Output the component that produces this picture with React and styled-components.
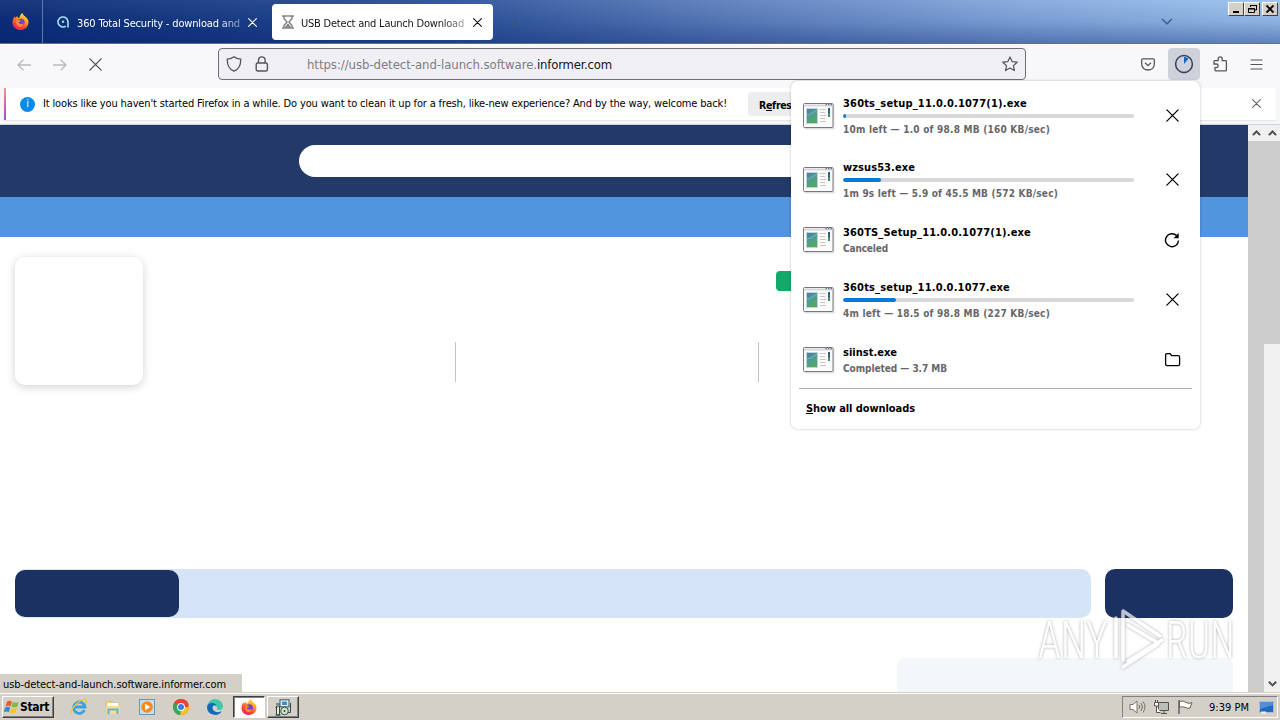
import React, { useLayoutEffect, useRef } from 'react'
import styled, { createGlobalStyle, css } from 'styled-components'

const downloads = [
  { name: '360ts_setup_11.0.0.1077(1).exe', nameWidth: 184, info: '10m left — 1.0 of 98.8 MB (160 KB/sec)', infoWidth: 207, progress: 1, action: 'cancel', height: 64 },
  { name: 'wzsus53.exe', nameWidth: 72, info: '1m 9s left — 5.9 of 45.5 MB (572 KB/sec)', infoWidth: 215, progress: 12.9, action: 'cancel', height: 64 },
  { name: '360TS_Setup_11.0.0.1077(1).exe', nameWidth: 188, info: 'Canceled', infoWidth: 45, action: 'retry', height: 56 },
  { name: '360ts_setup_11.0.0.1077.exe', nameWidth: 167, info: '4m left — 18.5 of 98.8 MB (227 KB/sec)', infoWidth: 207, progress: 18.2, action: 'cancel', height: 64 },
  { name: 'siinst.exe', nameWidth: 54, info: 'Completed — 3.7 MB', infoWidth: 104, action: 'folder', height: 56 },
]

// spreads the letters so a label always takes the given width
const Fit = ({ width, children, ...rest }) => {
  const ref = useRef(null)

  useLayoutEffect(() => {
    const el = ref.current
    el.style.letterSpacing = '0px'
    const natural = el.getBoundingClientRect().width
    el.style.letterSpacing = `${(width - natural) / el.textContent.length}px`
  }, [width, children])

  return <FitText ref={ref} {...rest}>{children}</FitText>
}

const Cross = ({ size = 12, color = '#15141a', weight = 1.2 }) => (
  <svg width={size} height={size} viewBox="0 0 12 12" fill="none" stroke={color} strokeWidth={weight} strokeLinecap="round">
    <path d="M.8.8l10.4 10.4M11.2.8L.8 11.2" />
  </svg>
)

const Chevron = ({ up, color = '#505050', width = 8, weight = 2 }) => (
  <svg width={width} height={width * 0.65} viewBox="0 0 12 8" fill="none" stroke={color} strokeWidth={weight * 1.4}>
    <path d={up ? 'M1 7l5-5 5 5' : 'M1 1l5 5 5-5'} />
  </svg>
)

const FirefoxLogo = ({ size = 17 }) => (
  <svg width={size} height={size} viewBox="0 0 17 17">
    <defs>
      <linearGradient id="fox" x1=".8" y1="0" x2=".3" y2="1">
        <stop offset="0" stopColor="#fff04a" />
        <stop offset=".4" stopColor="#ff9a22" />
        <stop offset=".75" stopColor="#ff4035" />
        <stop offset="1" stopColor="#e3206f" />
      </linearGradient>
    </defs>
    <path d="M10.5 0c.4 1.7 1.3 2.4 2.6 3.4 2.2 1.7 3.6 3.600 3.400 6.100C16.200 13.900 12.800 17 8.500 17 4 17 .5 13.700.5 9.200.5 7 1.300 5 2.700 3.400l.6 1.500 1.900-2 .8 2 1.500-.3C7.800 2.700 8.700.8 10.500 0z" fill="url(#fox)" />
    <circle cx="9" cy="9.300" r="3.600" fill="#7540d8" />
    <path d="M4.500 7.300c1.600-.8 2.900.1 4.400.5-1 1-2.300 1-2.600 2 1.200 1.600 3.600 1.900 5.300.5-.3 2.700-2.700 4-5 3.200-2.200-.8-3-3.700-2.100-6.200z" fill="#ff9027" />
  </svg>
)

const FileIcon = () => (
  <svg width="32" height="28" viewBox="0 0 32 28">
    <defs>
      <linearGradient id="shot" x1="0" y1="0" x2=".5" y2="1">
        <stop offset="0" stopColor="#4c7fa8" />
        <stop offset=".55" stopColor="#4d9d93" />
        <stop offset="1" stopColor="#55a860" />
      </linearGradient>
    </defs>
    <rect x="1.500" y="2" width="30" height="25.500" rx="1" fill="#000" opacity=".12" />
    <rect x=".5" y="1.500" width="29.500" height="24" rx="1" fill="#fcfcfc" stroke="#77797d" />
    <path d="M1 3.500h28.500" stroke="#d5d7dc" strokeWidth="2" />
    <path d="M22.500 2.700h1.500M25 2.700h1.500M27.500 2.700h1.500" stroke="#4f5870" />
    <rect x="3" y="6" width="12" height="16" fill="#c3d3dc" />
    <rect x="4" y="7" width="10" height="14" fill="url(#shot)" />
    <path d="M4 13c4-.5 7-3 10-5" stroke="#9ad0cf" fill="none" opacity=".6" />
    <path d="M17 7.500h6M17 10.500h5M17 13.500h6M17 16.500h5M17 19.500h6" stroke="#cbc6c3" />
    <rect x="25" y="6" width="2" height="9" fill="#355f82" />
    <rect x="25" y="11" width="2" height="4" fill="#468c68" />
  </svg>
)

const RowAction = ({ type }) => {
  if (type === 'retry') {
    return (
      <svg width="16" height="16" viewBox="0 0 16 16" fill="none" stroke="#000" strokeWidth="1.400">
        <path d="M14.500 8.500A6.500 6.500 0 1 1 12.600 3.600" />
        <path d="M14.700 1v5.200H9.500z" fill="#000" stroke="none" />
      </svg>
    )
  }
  if (type === 'folder') {
    return (
      <svg width="17" height="16" viewBox="0 0 17 16" fill="none" stroke="#000" strokeWidth="1.300">
        <path d="M1.600 3q0-1.300 1.300-1.300H6l1.800 1.900h6.400q1.400 0 1.400 1.400v7.200q0 1.400-1.400 1.400H3q-1.400 0-1.400-1.400z" />
      </svg>
    )
  }
  return <Cross size={13} color="#000" />
}

const DownloadsPanel = () => (
  <Panel>
    {downloads.map(d => (
      <DownloadRow key={d.name} $height={d.height}>
        <FileIcon />
        <Details>
          <FileName $tall={d.progress !== undefined}><Fit width={d.nameWidth}>{d.name}</Fit></FileName>
          {d.progress !== undefined && (
            <Track>
              <Bar style={{ width: `${d.progress}%` }} />
            </Track>
          )}
          <FileInfo $tall={d.progress !== undefined}><Fit width={d.infoWidth}>{d.info}</Fit></FileInfo>
        </Details>
        <ActionSlot $raise={d.action === 'cancel'}>
          <RowAction type={d.action} />
        </ActionSlot>
      </DownloadRow>
    ))}
    <PanelFooter>
      <Fit width={109}><u>S</u>how all downloads</Fit>
    </PanelFooter>
  </Panel>
)

const TabBar = () => (
  <TabStrip>
    <FirefoxSlot><FirefoxLogo /></FirefoxSlot>
    <Tab $width={225}>
      <svg width="12" height="12" viewBox="0 0 12 12" fill="none">
        <path d="M8.800 10.100A5 5 0 1 1 11 6v5.500" stroke="#a9e1f2" strokeWidth="1.600" />
        <circle cx="6" cy="5.800" r="1.300" fill="#8de6c5" />
      </svg>
      <TabTitle $gap={8}><Fit width={163}>360 Total Security - download and</Fit></TabTitle>
      <Cross size={9} color="#fff" weight={1.5} />
    </Tab>
    <Tab $active $width={221}>
      <svg width="12" height="14" viewBox="0 0 12 14" fill="none" stroke="#858585" strokeWidth="1.500">
        <path d="M0 1h12M0 13h12M2 1v2.500L5 7l-3 3.500V13M10 1v2.500L7 7l3 3.500V13" />
        <path d="M4 12l2-2.500L8 12z" fill="#858585" />
      </svg>
      <TabTitle $gap={7}><Fit width={163}>USB Detect and Launch Download</Fit></TabTitle>
      <Cross size={9} weight={1.500} />
    </Tab>
    <NewTab>
      <svg width="10" height="10" viewBox="0 0 10 10" stroke="#3c5480" strokeWidth="1.300"><path d="M5 0v10M0 5h10" /></svg>
    </NewTab>
    <TabListSlot><Chevron color="#3f5f92" width={12} weight={1.100} /></TabListSlot>
    <WindowButtons>
      <WindowButton><svg width="11" height="10"><path d="M2 8h6" stroke="#000" strokeWidth="2" /></svg></WindowButton>
      <WindowButton>
        <svg width="11" height="10" fill="none" stroke="#000"><path d="M3.500 3V1.500h6V6H8M3 1.500h7" /><path d="M1.500 4.500h6v4h-6zM1 5h7" /></svg>
      </WindowButton>
      <WindowButton $apart><svg width="10" height="10"><path d="M1.500 1.500l7 7M8.500 1.500l-7 7" stroke="#000" strokeWidth="1.800" /></svg></WindowButton>
    </WindowButtons>
  </TabStrip>
)

const Navigation = () => (
  <Toolbar>
    <NavButtons>
      <svg width="14" height="12" viewBox="0 0 14 12" fill="none" stroke="#b9b9bf" strokeWidth="1.300"><path d="M14 6H1M6.500.7L1 6l5.500 5.300" /></svg>
      <svg width="14" height="12" viewBox="0 0 14 12" fill="none" stroke="#b9b9bf" strokeWidth="1.300"><path d="M0 6h13M7.500.7L13 6l-5.500 5.300" /></svg>
      <Cross size={13} color="#4e4d55" />
    </NavButtons>
    <UrlBar>
      <svg width="16" height="16" viewBox="0 0 16 16" fill="none" stroke="#55545c" strokeWidth="1.300">
        <path d="M8 .8c2 1.600 4.200 2.100 6.700 2.300.2 5-.8 9.900-6.700 12.100C2.100 13 1.100 8.100 1.300 3.100 3.800 2.900 6 2.400 8 .8z" />
      </svg>
      <LockSlot>
        <svg width="14" height="16" viewBox="0 0 14 16" fill="none" stroke="#55545c" strokeWidth="1.400">
          <rect x="1.200" y="7" width="11.200" height="8" rx="1.500" />
          <path d="M3.500 7V4.200a3.300 3.300 0 0 1 6.600 0V7" />
        </svg>
      </LockSlot>
      <Address>
        <Fit width={230}>https://usb-detect-and-launch.software.</Fit>
        <Domain><Fit width={75}>informer.com</Fit></Domain>
      </Address>
      <svg width="16" height="16" viewBox="0 0 16 16" fill="none" stroke="#55545c" strokeWidth="1.200" strokeLinejoin="round">
        <path d="M8 .9l2.100 4.700 5.100.6-3.800 3.400 1 5L8 12.100l-4.500 2.500 1-5L.8 6.200l5.100-.6z" />
      </svg>
    </UrlBar>
    <ToolButtons>
      <ToolButton>
        <svg width="14" height="13" viewBox="0 0 14 13" fill="none" stroke="#55545c" strokeWidth="1.300">
          <path d="M1.800.8h10.400q1.100 0 1.100 1.100V6c0 8-12.600 8-12.600 0V1.900Q.7.800 1.800.8z" />
          <path d="M4 4.700l3 2.900 3-2.900" />
        </svg>
      </ToolButton>
      <ToolButton $open>
        <svg width="20" height="20" viewBox="0 0 20 20">
          <circle cx="10" cy="10" r="8.400" fill="none" stroke="#34405b" strokeWidth="1.500" />
          <path d="M10 10V3a7 7 0 0 1 4.500 1.500z" fill="#1263be" />
        </svg>
      </ToolButton>
      <ToolButton>
        <svg width="15" height="16" viewBox="0 0 15 16" fill="none" stroke="#55545c" strokeWidth="1.300">
          <path d="M5.200 4.600V2.800a2 2 0 0 1 4 0v1.800h3.400q.8 0 .8.800V14q0 .9-.9.900H3q-1 0-1-1v-2.300h1.300a1.800 1.800 0 0 0 0-3.600H1V5.400q0-.8.8-.8z" />
        </svg>
      </ToolButton>
      <ToolButton>
        <svg width="13" height="11" stroke="#55545c" strokeWidth="1.200"><path d="M.5 1h12M.5 5.500h12M.5 10h12" /></svg>
      </ToolButton>
    </ToolButtons>
  </Toolbar>
)

const Watermark = () => (
  <Mark width="204" height="70" viewBox="0 0 204 70">
    <g fill="#fff" fontFamily="Roboto, sans-serif" fontSize="52" fontWeight="300">
      <text transform="translate(4 51) scale(.8 1)">ANY</text>
      <text transform="translate(132 51) scale(.76 1)">RUN</text>
    </g>
    <g fill="none" stroke="#fff" strokeWidth="3.500" strokeLinejoin="round" strokeLinecap="round">
      <path d="M82 50V11M89 53V4l37 25M94 18l30 18M94 54l34-21M89 60l35-23" />
    </g>
  </Mark>
)

const Website = () => (
  <Viewport>
    <Page>
      <SiteHeader><SiteSearch /></SiteHeader>
      <SiteNav />
      <Hero>
        <AppLogo />
        <Stat $width={313} />
        <Stat $width={303} />
        <GreenButton />
      </Hero>
      <Links>
        <LinkBar><DarkButton $width={164} /></LinkBar>
        <DarkButton $width={128} />
      </Links>
      <SideBox />
    </Page>
    <Scrollbar $solid>
      <ScrollArrow><Chevron up width={9} /></ScrollArrow>
    </Scrollbar>
    <Scrollbar>
      <ScrollArrow><Chevron up width={9} /></ScrollArrow>
      <Thumb />
      <ScrollArrow $last><Chevron width={9} /></ScrollArrow>
    </Scrollbar>
    <StatusText><Fit width={223}>usb-detect-and-launch.software.informer.com</Fit></StatusText>
    <Watermark />
  </Viewport>
)

const Taskbar = () => (
  <TaskRow>
    <StartButton>
      <svg width="16" height="16" viewBox="0 0 16 16">
        <path d="M3 2.500c2-1 3.500-.8 5 .2L6.500 7.500c-1.600-.9-3-.9-5-.1z" fill="#e7602b" />
        <path d="M8.800 3c2 1 3.700 1 5.900 0l-1.400 4.800c-2.200.9-3.800.9-5.800 0z" fill="#7dbb42" />
        <path d="M1.200 8.400c2-.8 3.500-.7 5 .1L4.800 13.200c-1.500-.8-3-.8-5 0z" fill="#3c86cf" />
        <path d="M7.200 9c2 .9 3.600.8 5.800 0l-1.500 4.700c-2.100.9-3.700.8-5.700-.1z" fill="#f5c22d" />
      </svg>
      <Fit width={29}>Start</Fit>
    </StartButton>
    <QuickLaunch>
      <svg width="18" height="18" viewBox="0 0 18 18" fill="none">
        <path d="M14.500 12.200A5.700 5.700 0 1 1 15 9H5" stroke="#38a4df" strokeWidth="2.800" />
        <path d="M2 15.500C-1 13 8 2 14.500 1.600c2.500-.1 2.300 2 1.200 3.700" stroke="#ecc244" strokeWidth="1.300" />
      </svg>
      <svg width="18" height="18" viewBox="0 0 18 18">
        <path d="M2 3h5l1 2h7v10H2z" fill="#ecd686" stroke="#d8b962" strokeWidth=".7" />
        <path d="M3.500 5h11v3h-11z" fill="#fffdf0" />
        <path d="M2 8h14v8H2z" fill="#f5dd8a" />
        <path d="M4.500 16v-4.500h9V16" fill="none" stroke="#6ab2da" strokeWidth="2.200" />
      </svg>
      <svg width="18" height="18" viewBox="0 0 18 18">
        <rect x="1.500" y="1.500" width="15" height="15" fill="#c3dff2" stroke="#6697c2" />
        <circle cx="9" cy="9" r="5.800" fill="#f58a1f" />
        <path d="M7.200 5.800l5 3.200-5 3.200z" fill="#fff" />
      </svg>
      <svg width="18" height="18" viewBox="0 0 18 18">
        <circle cx="9" cy="9" r="8" fill="#e74436" />
        <path d="M9 9L2.100 5A8 8 0 0 0 8.300 17l4.200-6z" fill="#36a853" />
        <path d="M9 9h7.500V6.200A8 8 0 0 1 8.300 17z" fill="#fbc51c" />
        <path d="M2.100 5A8 8 0 0 1 16.300 5.700H9z" fill="#e74436" />
        <circle cx="9" cy="9" r="3.900" fill="#fff" />
        <circle cx="9" cy="9" r="3" fill="#3b7de9" />
      </svg>
      <svg width="18" height="18" viewBox="0 0 18 18">
        <path d="M1 9a8 8 0 0 1 15.900-1c.2 2.500-1.800 4.300-4.500 4.100-2.100-.2-1-1.300-1.200-2.300C10.500 6.800 5 7 4 11z" fill="#31b8cf" />
        <path d="M9 1c5 0 8 3.500 8 7-.2 3-2.500 4.300-4.800 4-2-.2-.9-1.200-1-2.300C11 6 5 3 2 6c1.200-3 3.800-5 7-5z" fill="#50cf88" opacity=".55" />
        <path d="M1 9c1-4 6-5.500 9.300-2C7 6.500 5.800 9 7 11.500c1.500 3 5.500 3.200 8.700 1.800A8 8 0 0 1 1 9z" fill="#1668b8" />
      </svg>
    </QuickLaunch>
    <TaskButton $pressed><FirefoxLogo size={16} /></TaskButton>
    <TaskButton>
      <svg width="18" height="17" viewBox="0 0 18 17">
        <rect x="6" y=".8" width="9" height="7" fill="#e7eff6" stroke="#3a5664" />
        <path d="M8 2.500h5v3.500H8z" fill="#3a92cb" />
        <path d="M16.500 4v9.500H13M2 5h4" stroke="#33484f" fill="none" />
        <path d="M2.500 7h3v9h-3zM1.500 8.500h2M1.500 16h5" fill="#e8ebe2" stroke="#34443c" />
        <circle cx="10.500" cy="12" r="3.800" fill="#d2e4cc" stroke="#36584a" />
        <circle cx="10.500" cy="12" r=".9" fill="#263a35" />
      </svg>
    </TaskButton>
    <Tray>
      <svg width="17" height="16" viewBox="0 0 17 16" fill="#fff" stroke="#77736d">
        <path d="M1 5.500h3L8 2v12l-4-3.500H1z" />
        <path d="M10 6q1.500 2 0 4M12 4q3 4 0 8M14 2.500q4 5.500 0 11" fill="none" />
      </svg>
      <svg width="17" height="16" viewBox="0 0 17 16" fill="#fff" stroke="#56524e">
        <path d="M5.500 3.500h10v8h-10z" fill="#bcbcb8" />
        <path d="M8 14.500h6M11 12v2" />
        <path d="M1.500 3.500h4V7h-4zM2.500 1v2M4.500 1v2M3.500 7v6.500h4" />
      </svg>
      <svg width="17" height="16" viewBox="0 0 17 16" fill="#fff" stroke="#67625c">
        <path d="M2.500 2.500q4-1.500 6.500 1 3 1.500 6 .2l-2 5.300q-2.500 1-5-.7-2.500-1.200-5.500 0z" />
        <path d="M2 1v14" strokeWidth="1.500" />
      </svg>
      <Clock><Fit width={40}>9:39 PM</Fit></Clock>
      <svg width="15" height="13" viewBox="0 0 15 13">
        <rect x=".5" y=".5" width="14" height="11" rx="1" fill="#2468bd" stroke="#a8bed8" />
        <path d="M1 1h13v3L1 8z" fill="#70a9e5" opacity=".6" />
        <path d="M2 11.500h5" stroke="#e9f3ff" strokeWidth="2" />
      </svg>
    </Tray>
  </TaskRow>
)

const App = () => (
  <Screen>
    <GlobalStyle />
    <TabBar />
    <Navigation />
    <NoticeArea>
      <Notice>
        <InfoBadge>i</InfoBadge>
        <Fit width={684}>It looks like you haven't started Firefox in a while. Do you want to clean it up for a fresh, like-new experience? And by the way, welcome back!</Fit>
        <RefreshButton>R<u>e</u>fresh Firefox…</RefreshButton>
        <NoticeClose><Cross size={9} color="#66656b" weight={1.500} /></NoticeClose>
      </Notice>
    </NoticeArea>
    <Website />
    <Taskbar />
    <DownloadsPanel />
  </Screen>
)

export default App

const GlobalStyle = createGlobalStyle`
  * {
    box-sizing: border-box;
  }
  body {
    margin: 0;
    overflow: hidden;
  }
  svg {
    display: block;
    flex-shrink: 0;
  }
`

const FitText = styled.span`
  display: inline-block;
  white-space: pre;
`

const Screen = styled.div`
  position: relative;
  display: flex;
  flex-direction: column;
  width: 1280px;
  height: 720px;
  overflow: hidden;
  background: #fff;
  color: #000;
  font-family: 'DejaVu Sans Condensed', 'DejaVu Sans', sans-serif;
  font-stretch: condensed;
  font-size: 11px;
  line-height: 14px;
`

const TabStrip = styled.div`
  display: flex;
  flex-shrink: 0;
  height: 44px;
  border-bottom: 1px solid #626e88;
  background:
    linear-gradient(to bottom, rgba(255, 255, 255, 0.06), rgba(10, 40, 110, 0.1) 50%, rgba(5, 35, 110, 0.4)),
    linear-gradient(to right, #0b2b75 0, #173b84 220px, #2c5198 450px, #5b7dba 720px, #84a8dc 1020px, #9bc3ed 1280px);
`

const FirefoxSlot = styled.div`
  display: flex;
  align-items: center;
  width: 43px;
  padding-left: 12px;
  border-right: 1px solid #6077a8;
`

const Tab = styled.div`
  display: flex;
  align-items: center;
  width: ${p => p.$width}px;
  height: 36px;
  margin: 4px 0 0 2px;
  padding: 0 13px 0 12px;
  color: #fff;
  ${p => p.$active && css`
    padding: 0 11px 0 10px;
    border-radius: 4px;
    background: #fff;
    color: #15141a;
  `}
`

const TabTitle = styled.div`
  flex: 1;
  margin-left: ${p => p.$gap}px;
  padding-top: 3px;
  overflow: hidden;
  white-space: nowrap;
  mask-image: linear-gradient(to right, #000 140px, rgba(0, 0, 0, 0.4) 163px);
`

const NewTab = styled.div`
  padding: 17px 0 0 17px;
`

const TabListSlot = styled.div`
  margin-left: auto;
  padding: 18px 55px 0 0;
`

const WindowButtons = styled.div`
  display: flex;
  padding: 2px 2px 0 0;
`

const WindowButton = styled.div`
  display: flex;
  align-items: center;
  justify-content: center;
  width: 16px;
  height: 14px;
  margin-left: ${p => (p.$apart ? 2 : 0)}px;
  border: 1px solid;
  border-color: #fff #404040 #404040 #fff;
  background: #d4d0c8;
`

const Toolbar = styled.div`
  display: flex;
  flex-shrink: 0;
  height: 44px;
  padding-top: 4px;
  border-top: 1px solid #fff;
  background: #f8f8fb;
`

const NavButtons = styled.div`
  display: flex;
  align-items: center;
  gap: 22px;
  width: 218px;
  height: 31px;
  padding-left: 17px;
`

const UrlBar = styled.div`
  display: flex;
  align-items: center;
  width: 808px;
  height: 32px;
  margin-top: -1px;
  padding: 0 7px;
  border: 1px solid #6f6e77;
  border-radius: 4px;
  background: #f0f0f4;
`

const LockSlot = styled.div`
  margin-left: 13px;
`

const Address = styled.div`
  flex: 1;
  display: flex;
  padding: 2px 0 0 38px;
  color: #7d7d83;
  font-size: 13px;
`

const Domain = styled.span`
  color: #15141a;
`

const ToolButtons = styled.div`
  display: flex;
  gap: 4px;
  margin-left: auto;
  padding-right: 8px;
`

const ToolButton = styled.div`
  display: flex;
  align-items: center;
  justify-content: center;
  width: 32px;
  height: 32px;
  margin-top: -1px;
  border-radius: 4px;
  background: ${p => (p.$open ? '#cfd1db' : 'transparent')};
`

const NoticeArea = styled.div`
  flex-shrink: 0;
  height: 37px;
  padding-right: 4px;
  padding-left: 4px;
  border-bottom: 1px solid #cbd4dc;
  background: #f5f7f9;
`

const Notice = styled.div`
  display: flex;
  align-items: center;
  height: 32px;
  padding-bottom: 1px;
  border-left: 2px solid;
  border-image: linear-gradient(#f0a079, #e75bb6 50%, #9354d0) 1;
  background: #fff;
  box-shadow: 0 1px 1px #e4e6e8;
`

const InfoBadge = styled.span`
  width: 15px;
  height: 15px;
  margin: 1px 8px 0 14px;
  border-radius: 50%;
  background: #098bea;
  color: #fff;
  text-align: center;
`

const RefreshButton = styled.span`
  height: 24px;
  margin-left: 21px;
  padding: 6px 11px;
  border-radius: 4px;
  background: #ededf0;
  font-weight: bold;
  font-size: 10.5px;
  letter-spacing: -0.3px;
  white-space: nowrap;
`

const NoticeClose = styled.span`
  margin-left: auto;
  padding-right: 15px;
`

const Viewport = styled.div`
  position: relative;
  display: flex;
  flex-shrink: 0;
  height: 567px;
`

const Page = styled.div`
  width: 1248px;
  overflow: hidden;
`

const SiteHeader = styled.div`
  height: 72px;
  padding: 20px 0 0 299px;
  background: #233967;
`

const SiteSearch = styled.div`
  width: 650px;
  height: 32px;
  border-radius: 16px;
  background: #fff;
`

const SiteNav = styled.div`
  height: 40px;
  background: #5195df;
`

const Hero = styled.div`
  display: flex;
  height: 333px;
  padding: 20px 15px 0;
`

const AppLogo = styled.div`
  width: 128px;
  height: 128px;
  border-radius: 10px;
  background: #fff;
  box-shadow: 0 2px 10px rgba(0, 0, 0, 0.18);
`

const Stat = styled.div`
  width: ${p => p.$width}px;
  height: 40px;
  margin-top: 85px;
  border-right: 1px solid #c3c3c3;
`

const GreenButton = styled.div`
  width: 100px;
  height: 20px;
  margin: 14px 0 0 17px;
  border-radius: 4px;
  background: #12aa6b;
`

const Links = styled.div`
  display: flex;
  gap: 14px;
  margin-top: -1px;
  padding: 0 15px;
`

const LinkBar = styled.div`
  width: 1076px;
  height: 49px;
  padding-top: 1px;
  border-radius: 10px;
  background: #d5e4f6;
`

const DarkButton = styled.div`
  width: ${p => p.$width}px;
  height: ${p => (p.$width > 130 ? 47 : 49)}px;
  border-radius: 10px;
  background: #1b3162;
`

const SideBox = styled.div`
  width: 336px;
  height: 50px;
  margin: 40px 0 0 897px;
  border-radius: 8px;
  background: #f3f7fa;
`

const Scrollbar = styled.div`
  display: flex;
  flex-direction: column;
  width: 16px;
  background: ${p => (p.$solid ? '#cdcdcd' : '#f0f0f0')};
`

const ScrollArrow = styled.div`
  display: flex;
  align-items: center;
  justify-content: center;
  height: 16px;
  margin-top: ${p => (p.$last ? 'auto' : 0)};
  background: #f0f0f0;
`

const Thumb = styled.div`
  height: 203px;
  background: #cdcdcd;
`

const StatusText = styled.div`
  position: absolute;
  bottom: 0;
  left: 0;
  width: 242px;
  height: 18px;
  padding: 4px 3px 0;
  background: #d4d0c8;
`

const Mark = styled.svg`
  position: absolute;
  top: 482px;
  left: 1034px;
  overflow: visible;
  filter: drop-shadow(0 0 1.5px rgba(70, 75, 85, 0.65));
  opacity: 0.7;
`

const TaskRow = styled.div`
  display: flex;
  align-items: center;
  flex-shrink: 0;
  height: 28px;
  padding: 1px 2px 0;
  border-top: 1px solid #d4d0c8;
  background: #d4d0c8;
  box-shadow: inset 0 1px #fff;
`

const raised = css`
  border: 1px solid;
  border-color: #fff #404040 #404040 #fff;
  box-shadow: inset -1px -1px #808080;
`

const StartButton = styled.div`
  display: flex;
  align-items: center;
  width: 52px;
  height: 22px;
  padding-left: 1px;
  font-weight: bold;
  font-size: 12px;
  ${raised}
`

const QuickLaunch = styled.div`
  display: flex;
  gap: 16px;
  width: 179px;
  padding-left: 16px;
`

const TaskButton = styled.div`
  display: flex;
  align-items: center;
  justify-content: center;
  width: 32px;
  height: 22px;
  margin-right: 2px;
  ${raised}
  ${p => p.$pressed && css`
    border-color: #404040 #fff #fff #404040;
    background: #fff;
    box-shadow: inset 1px 1px #808080;
  `}
`

const Tray = styled.div`
  display: flex;
  align-items: center;
  gap: 7px;
  width: 156px;
  height: 22px;
  margin-left: auto;
  padding-left: 6px;
  border: 1px solid;
  border-color: #808080 #fff #fff #808080;
`

const Clock = styled.div`
  width: 43px;
  margin-left: 8px;
  padding-top: 1px;
`

const Panel = styled.div`
  position: absolute;
  top: 81px;
  left: 791px;
  width: 409px;
  height: 348px;
  padding: 3px 8px 0;
  border-radius: 7px;
  background: #fff;
  box-shadow: 0 0 3px rgba(0, 0, 0, 0.25);
`

const DownloadRow = styled.div`
  display: flex;
  align-items: center;
  height: ${p => p.$height}px;
  padding-left: 4px;
`

const Details = styled.div`
  width: 291px;
  margin-left: 8px;
`

const FileName = styled.div`
  height: ${p => (p.$tall ? 18 : 16)}px;
  padding-top: 1px;
  font-weight: bold;
`

const Track = styled.div`
  height: 4px;
  border-radius: 2px;
  overflow: hidden;
  background: #d8d8d8;
`

const Bar = styled.div`
  height: 4px;
  border-radius: 2px;
  background: #087bd9;
`

const FileInfo = styled.div`
  height: ${p => (p.$tall ? 18 : 14)}px;
  padding-top: ${p => (p.$tall ? 5 : 1)}px;
  color: #66666b;
  font-weight: bold;
  font-size: 10px;
`

const ActionSlot = styled.div`
  display: flex;
  align-items: center;
  justify-content: center;
  width: 32px;
  margin-left: 22px;
  padding-bottom: ${p => (p.$raise ? 1 : 0)}px;
`

const PanelFooter = styled.div`
  padding: 13px 7px;
  border-top: 1px solid #b2b2b5;
  font-weight: bold;
`
